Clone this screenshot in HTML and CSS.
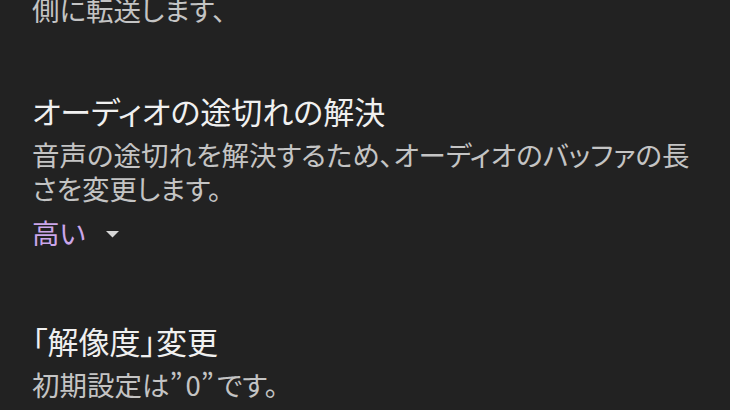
FILE: index.html
```html
<!DOCTYPE html>
<html lang="ja">
<head>
<meta charset="utf-8">
<link rel="stylesheet" href="styles.css">
</head>
<body>
<main class="list">
  <section class="item item-first">
    <p class="desc">側に転送します、</p>
  </section>
  <section class="item">
    <h2 class="title">オーディオの途切れの解決</h2>
    <p class="desc">音声の途切れを解決するため、オーディオのバッファの長さを変更します。</p>
    <div class="select">
      <span class="select-value">高い</span>
      <svg class="select-arrow" width="15" height="8" viewBox="0 0 15 8"><path d="M1 1 L14 1 L7.5 7.5 Z" fill="#d6d6d6"/></svg>
    </div>
  </section>
  <section class="item">
    <h2 class="title">「解像度」変更</h2>
    <p class="desc">初期設定は<span class="quote">”</span>0<span class="quote">”</span>です。</p>
  </section>
</main>
</body>
</html>
```
FILE: styles.css
```css
html, body {
  margin: 0;
  padding: 0;
  background: #222222;
  height: 100%;
  overflow: hidden;
}
body {
  font-family: "Noto Sans CJK JP", "Noto Sans", sans-serif;
  font-feature-settings: "palt";
}
.list {
  padding: 0 30px 0 32px;
  display: flex;
  flex-direction: column;
  gap: 65px;
}
.item-first {
  margin-top: -8px;
}
.item {
  display: flex;
  flex-direction: column;
}
.title {
  margin: 0 0 6px 0;
  font-size: 31px;
  line-height: 40px;
  font-weight: 400;
  color: #f0f0f0;
}
.desc {
  margin: 0;
  font-size: 27.5px;
  line-height: 34px;
  color: #c4c4c4;
}
.quote {
  padding: 0 3px 0 0;
}
.select {
  display: flex;
  align-items: center;
  gap: 20px;
  height: 34px;
  margin: 10px 0 7px 0;
}
.select-value {
  font-size: 27.5px;
  line-height: 34px;
  color: #cba6ea;
}
.select-arrow {
  margin-top: 4px;
}
```
